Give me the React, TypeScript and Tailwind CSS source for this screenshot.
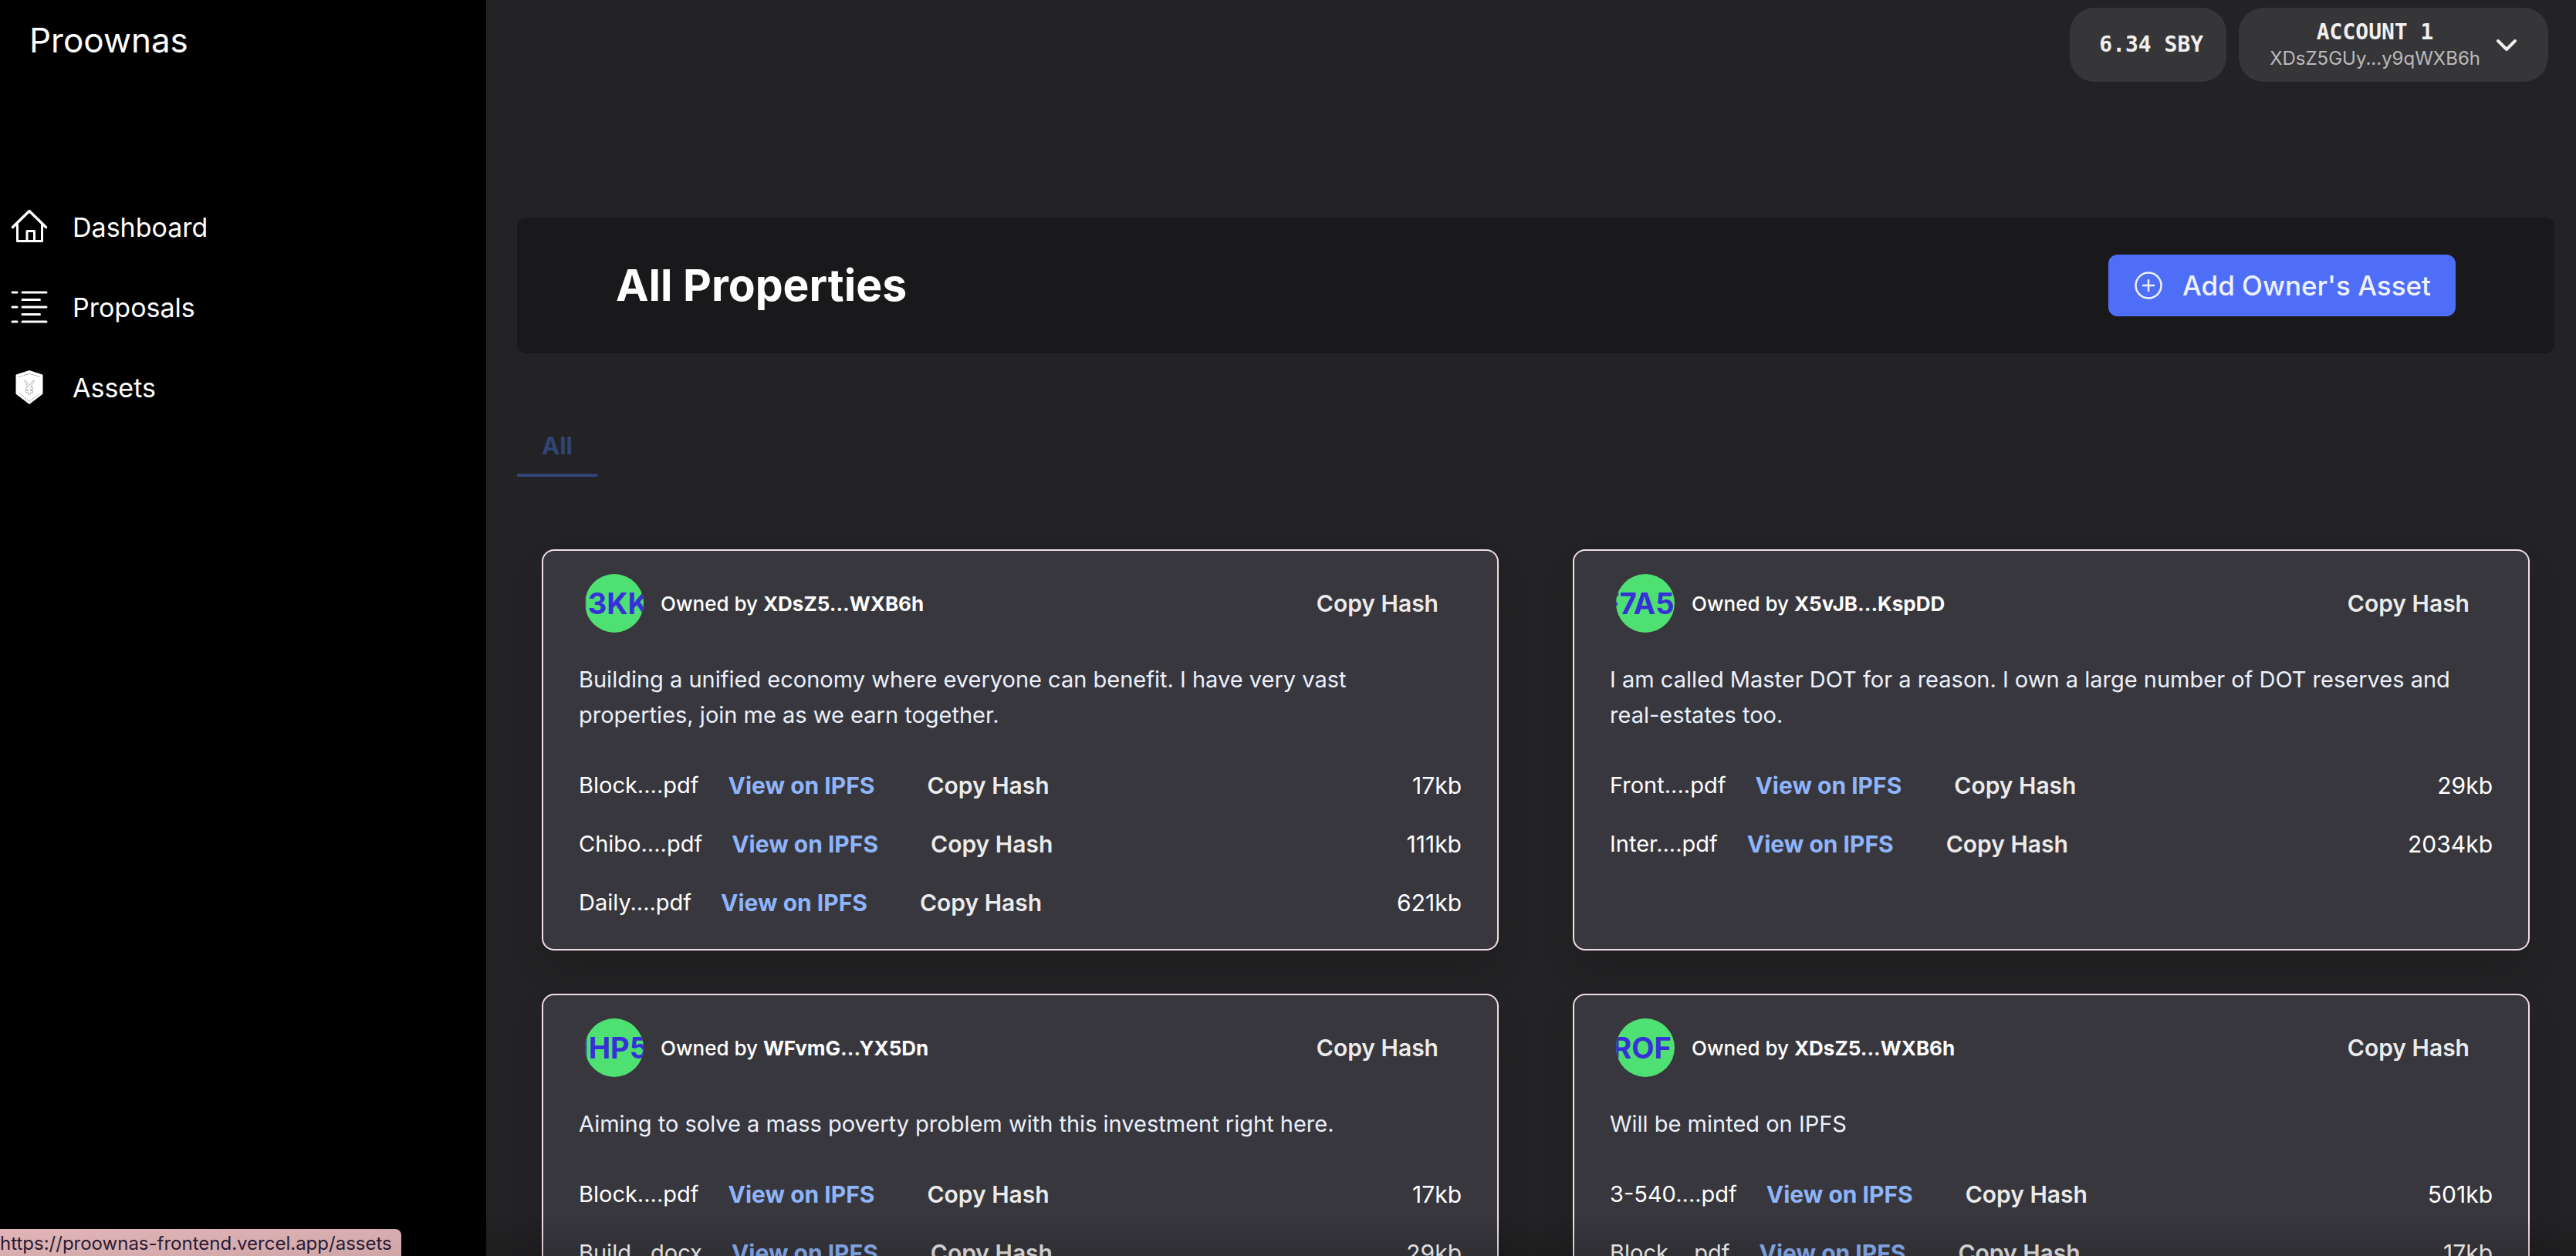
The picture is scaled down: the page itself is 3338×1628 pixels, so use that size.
import React from "react";

type AssetFile = { name: string; size: string };
type Property = {
  avatar: string;
  owner: string;
  description: string;
  files: AssetFile[];
};

const properties: Property[] = [
  {
    avatar: "I3KK",
    owner: "XDsZ5...WXB6h",
    description:
      "Building a unified economy where everyone can benefit. I have very vast properties, join me as we earn together.",
    files: [
      { name: "Block....pdf", size: "17kb" },
      { name: "Chibo....pdf", size: "111kb" },
      { name: "Daily....pdf", size: "621kb" },
    ],
  },
  {
    avatar: "F7A5\u00a0\u00a0",
    owner: "X5vJB...KspDD",
    description:
      "I am called Master DOT for a reason. I own a large number of DOT reserves and real-estates too.",
    files: [
      { name: "Front....pdf", size: "29kb" },
      { name: "Inter....pdf", size: "2034kb" },
    ],
  },
  {
    avatar: "IHP5",
    owner: "WFvmG...YX5Dn",
    description:
      "Aiming to solve a mass poverty problem with this investment right here.",
    files: [
      { name: "Block....pdf", size: "17kb" },
      { name: "Build...docx", size: "29kb" },
    ],
  },
  {
    avatar: "ROF\u00a0",
    owner: "XDsZ5...WXB6h",
    description: "Will be minted on IPFS",
    files: [
      { name: "3-540....pdf", size: "501kb" },
      { name: "Block....pdf", size: "17kb" },
    ],
  },
];

function HomeIcon() {
  return (
    <svg viewBox="0 0 48 48" className="size-12 shrink-0" fill="none" stroke="currentColor" aria-hidden="true">
      <path d="M2.5 24.500 24 3.500l21.500 21" strokeWidth="3.500" strokeLinecap="round" strokeLinejoin="round" />
      <path d="M8.500 20.500v22h32v-22M21 42V29.500h9.500V42" strokeWidth="3" strokeLinejoin="round" />
    </svg>
  );
}

function ListIcon() {
  return (
    <svg viewBox="0 0 48 48" className="size-12 shrink-0" fill="none" stroke="currentColor" strokeWidth="3" strokeLinecap="round" aria-hidden="true">
      <path d="M2 5h6M15 5h31M15 14.500h22.500M2 24h6M15 24h31M15 33.500h22.500M2 43h6M15 43h31" />
    </svg>
  );
}

function ShieldIcon() {
  return (
    <svg viewBox="0 0 48 48" className="size-12 shrink-0" fill="none" aria-hidden="true">
      <path d="M24 2.500 41 8v24.500L24 45.500 7 32.500V8z" fill="#fff" stroke="#fff" strokeLinejoin="round" />
      <path d="M10 10.500 24 6.500l14 4M10.500 31.500 24 42.500l13.500-11" stroke="#8a8a8a" strokeWidth="1" strokeDasharray="2 1.500" />
      <path
        d="M17.500 15.500 22.500 24h-3v3h3v1.500h-3V31h3v2l1.500 1 1.500-1v-2h3v-2.500h-3V27h3v-3h-3l5-8.500h-2L24 21.500l-4.500-6z"
        stroke="#b5b5b5"
        strokeWidth="1"
      />
    </svg>
  );
}

const navItems = [
  { label: "Dashboard", icon: <HomeIcon /> },
  { label: "Proposals", icon: <ListIcon /> },
  { label: "Assets", icon: <ShieldIcon /> },
];

function Sidebar() {
  return (
    <aside className="w-[630px] shrink-0 bg-black pt-7 text-white">
      <div className="pl-[38px] text-[44px] leading-12">Proownas</div>
      <nav className="mt-[166px] flex flex-col">
        {navItems.map((item) => (
          <a key={item.label} href="#" className="flex h-26 items-center gap-8 pl-[14px] text-[34px]">
            {item.icon}
            {item.label}
          </a>
        ))}
      </nav>
    </aside>
  );
}

function TopBar() {
  return (
    <header className="flex h-24 justify-end gap-4 pr-2">
      <div className="flex items-center rounded-[32px] bg-[#363638] pr-[30px] pl-[38px] font-['DejaVu_Sans_Mono',monospace] text-[28px] font-bold text-[#f0f0f0]">
        6.34 SBY
      </div>
      <button type="button" className="flex items-center gap-3.5 rounded-[32px] bg-[#363638] pr-[34px] pl-10">
        <span className="flex flex-col items-center">
          <span className="font-['DejaVu_Sans_Mono',monospace] text-[28px] leading-9 font-bold text-[#f0f0f0]">
            ACCOUNT 1
          </span>
          <span className="text-[24px] leading-8 text-[#bababb]">XDsZ5GUy...y9qWXB6h</span>
        </span>
        <svg viewBox="0 0 40 40" className="size-10" fill="none" stroke="#f0f0f0" strokeWidth="4" strokeLinecap="round" strokeLinejoin="round" aria-hidden="true">
          <path d="M9 15l11 11 11-11" />
        </svg>
      </button>
    </header>
  );
}

function PropertyCard({ property }: { property: Property }) {
  return (
    <article className="rounded-2xl border-2 border-[#f3dde8] bg-[#38373d] px-[46px] pt-[30px] pb-[22px] text-white shadow-[0_24px_48px_-8px_rgba(0,0,0,0.2)]">
      <div className="flex items-center pl-2">
        <div className="flex size-[76px] shrink-0 items-center justify-center overflow-hidden rounded-full bg-[#4ee072] text-[38px] font-bold text-[#3730d8]">
          {property.avatar}
        </div>
        <p className="ml-[22px] text-[26px] font-medium">
          Owned by <b className="font-bold">{property.owner}</b>
        </p>
        <button type="button" className="ml-auto px-[30px] text-[30px] font-semibold text-[#ebebeb]">
          Copy Hash
        </button>
      </div>
      <p className="mt-[38px] max-w-[1100px] text-[29px] leading-[46px] text-[#ebf0fb]">{property.description}</p>
      <ul className="mt-[30px] text-[30px]">
        {property.files.map((file) => (
          <li key={file.name} className="flex h-19 items-center gap-[38px]">
            <span className="text-[29px]">{file.name}</span>
            <a href="#" className="font-bold text-[#8eb5fb]">
              View on IPFS
            </a>
            <button type="button" className="px-[30px] font-semibold text-[#ebebeb]">
              Copy Hash
            </button>
            <span className="ml-auto">{file.size}</span>
          </li>
        ))}
      </ul>
    </article>
  );
}

export default function App() {
  return (
    <div className="flex h-screen overflow-hidden bg-[#232325] font-[Inter,sans-serif]">
      <Sidebar />
      <main className="min-w-0 flex-1 pt-[10px] pr-7 pl-10">
        <TopBar />
        <section className="mt-44 flex items-center justify-between rounded-xl bg-[#19191b] px-32 py-12">
          <h1 className="text-[57px] leading-[80px] font-bold text-white">All Properties</h1>
          <button type="button" className="flex h-20 items-center gap-[26px] rounded-xl bg-[#4f6ef7] pr-8 pl-[34px] text-[35px] font-medium text-[#eef2ff]">
            <svg viewBox="0 0 36 36" className="size-9" fill="none" stroke="currentColor" strokeLinecap="round" aria-hidden="true">
              <circle cx="18" cy="18" r="16.500" strokeWidth="2.500" />
              <path d="M18 11v14M11 18h14" strokeWidth="2.500" />
            </svg>
            Add Owner's Asset
          </button>
        </section>
        <div role="tablist" className="mt-24 flex">
          <button type="button" role="tab" aria-selected="true" className="border-b-4 border-[#304576] px-8 pb-3 text-[31px] leading-12 font-bold text-[#304576]">
            All
          </button>
        </div>
        <section className="mt-[94px] grid grid-cols-2 gap-x-24 gap-y-14 px-8">
          {properties.map((property, index) => (
            <PropertyCard key={index} property={property} />
          ))}
        </section>
      </main>
      <div className="pointer-events-none fixed inset-x-0 bottom-0 h-12 bg-linear-to-t from-black/15 to-transparent" />
      <div className="fixed bottom-0 left-0 h-[35px] rounded-tr-lg bg-linear-to-br from-[#e2b5b7] to-[#cfa6a8] pr-3 text-[24px] leading-[38px] text-[#2a1a33]">
        https://proownas-frontend.vercel.app/assets
      </div>
    </div>
  );
}
